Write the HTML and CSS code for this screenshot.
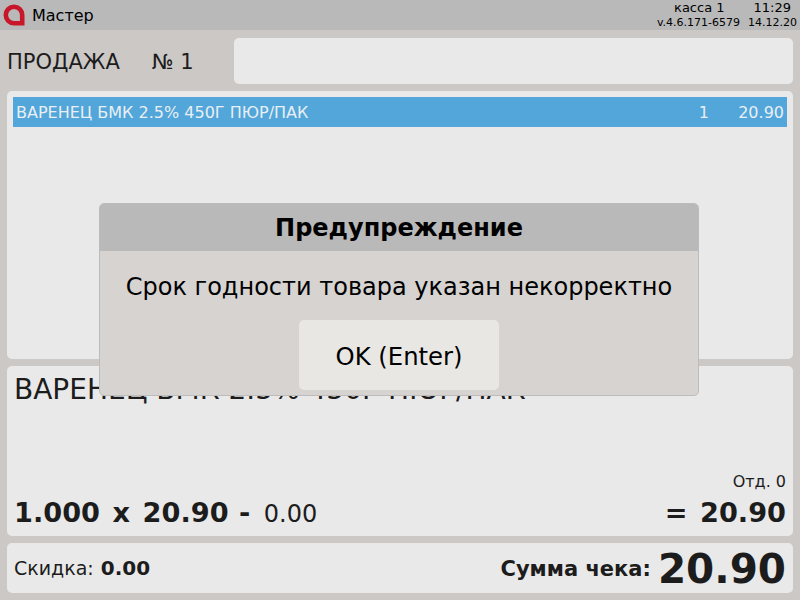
FILE: index.html
```html
<!DOCTYPE html>
<html lang="ru">
<head>
  <meta charset="UTF-8" />
  <title>Мастер</title>
  <link rel="stylesheet" href="styles.css">
</head>
<body>
  <header class="topbar">
    <svg class="logo" width="22" height="22" viewBox="0 0 22 22">
      <path d="M11 19.2A8.2 8.2 0 1 1 19.2 11V19.2Z" fill="none" stroke="#c8172b" stroke-width="4.6"/>
    </svg>
    <span class="user">Мастер</span>
    <div class="info">
      <div class="info-top"><span class="kassa">касса 1</span><span class="time">11:29</span></div>
      <div class="info-bottom"><span>v.4.6.171-6579</span><span>14.12.20</span></div>
    </div>
  </header>

  <main class="content">
    <div class="sale-row">
      <div class="sale-title"><span class="sale-name">ПРОДАЖА</span><span>№ 1</span></div>
      <div class="sale-input"></div>
    </div>

    <section class="panel items">
      <div class="item selected">
        <span class="item-name">ВАРЕНЕЦ БМК 2.5% 450Г ПЮР/ПАК</span>
        <span class="item-qty">1</span>
        <span class="item-sum">20.90</span>
      </div>
    </section>

    <section class="panel current">
      <div class="current-name">ВАРЕНЕЦ БМК 2.5% 450Г ПЮР/ПАК</div>
      <div class="dept">Отд. 0</div>
      <div class="calc">
        <b>1.000</b><b>x</b><b>20.90</b><b class="calc-minus">-</b><span class="calc-discount">0.00</span>
        <b class="calc-result">=</b><b>20.90</b>
      </div>
    </section>

    <section class="panel totals">
      <div class="discount">Скидка: <b class="discount-sum">0.00</b></div>
      <div class="total"><b class="total-label">Сумма чека:</b><b class="total-sum">20.90</b></div>
    </section>
  </main>

  <div class="dialog">
    <div class="dialog-title">Предупреждение</div>
    <div class="dialog-text">Срок годности товара указан некорректно</div>
    <button class="dialog-btn">OK (Enter)</button>
  </div>
</body>
</html>
```

FILE: styles.css
```css
* {
  box-sizing: border-box;
}
body {
  margin: 0;
  width: 800px;
  height: 600px;
  overflow: hidden;
  position: relative;
  font-family: "DejaVu Sans", sans-serif;
  color: #1c1c1c;
  background: #ccc8c5;
}
.topbar {
  height: 30px;
  display: flex;
  align-items: center;
  padding: 0 3px;
  background: #b9b9b9;
  color: #000;
}
.logo {
  margin-right: 7px;
}
.user {
  font-size: 16px;
  padding-top: 1px;
}
.info {
  margin-left: auto;
  font-size: 11px;
}
.info-top {
  display: flex;
  justify-content: flex-end;
  font-size: 13px;
  line-height: 16px;
  padding-right: 6px;
  gap: 29px;
}
.info-bottom {
  display: flex;
  gap: 8px;
  line-height: 14px;
}
.content {
  padding: 8px 7px 0;
}
.sale-row {
  display: flex;
  height: 46px;
  margin-bottom: 7px;
}
.sale-title {
  width: 227px;
  display: flex;
  align-items: center;
  font-size: 21px;
  gap: 32px;
  padding-top: 2px;
}
.sale-input {
  flex: 1;
  background: #e9e9e9;
  border-radius: 5px;
}
.panel {
  background: #e9e9e9;
  border-radius: 5px;
  margin-bottom: 7px;
}
.items {
  height: 268px;
  padding: 6px;
}
.item {
  height: 30px;
  display: flex;
  align-items: center;
  padding: 1px 3px 0;
  font-size: 16px;
}
.selected {
  background: #52a6da;
  color: #e9eff3;
}
.item-name {
  flex: 1;
}
.item-sum {
  width: 75px;
  text-align: right;
}
.current {
  height: 170px;
  padding: 6px 7px;
  display: flex;
  flex-direction: column;
}
.current-name {
  font-size: 28px;
  line-height: 36px;
}
.dept {
  margin-top: auto;
  text-align: right;
  font-size: 16px;
  line-height: 18px;
  position: relative;
  top: 3px;
}
.calc {
  display: flex;
  align-items: baseline;
  gap: 12.5px;
  font-size: 27.2px;
  line-height: 30px;
  margin-top: 10px;
  margin-bottom: 1px;
}
.calc-minus {
  margin-left: -2px;
  margin-right: 1px;
}
.calc-discount {
  font-size: 24px;
}
.calc-result {
  margin-left: auto;
}
.totals {
  height: 50px;
  margin-bottom: 0;
  padding: 0 7px;
  display: flex;
  align-items: center;
  justify-content: space-between;
}
.discount {
  font-size: 19px;
}
.discount-sum {
  font-size: 20px;
  margin-left: 1px;
}
.total {
  display: flex;
  align-items: center;
  gap: 7px;
  padding-top: 2px;
}
.total-label {
  font-size: 21px;
}
.total-sum {
  font-size: 40.5px;
  line-height: 48px;
}
.dialog {
  position: absolute;
  left: 99px;
  top: 203px;
  width: 600px;
  height: 193px;
  display: flex;
  flex-direction: column;
  align-items: center;
  background: #d6d3d0;
  border: 1px solid #bcbcbc;
  border-radius: 5px;
  color: #000;
  overflow: hidden;
}
.dialog-title {
  width: 100%;
  height: 47px;
  line-height: 48px;
  text-align: center;
  font-size: 24px;
  font-weight: bold;
  background: #b9b9b9;
}
.dialog-text {
  margin-top: 21px;
  font-size: 24px;
  line-height: 30px;
}
.dialog-btn {
  width: 200px;
  height: 70px;
  margin-top: 18px;
  padding-top: 4px;
  border: none;
  border-radius: 5px;
  background: #e8e7e4;
  color: #000;
  font-family: inherit;
  font-size: 24.3px;
}
```
